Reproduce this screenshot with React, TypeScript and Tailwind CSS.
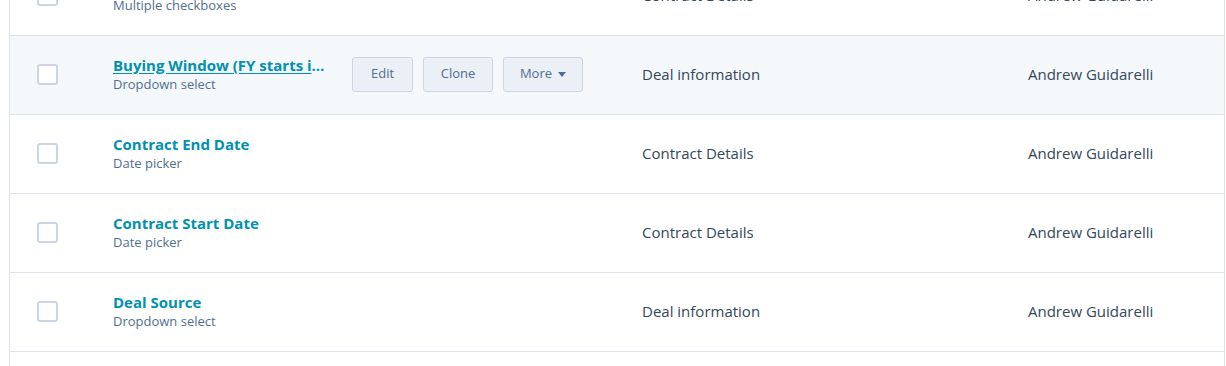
import { ReactNode } from 'react'

type Row = {
  name: string
  type: string
  group: string
  owner: string
  hovered?: boolean
}

const rows: Row[] = [
  { name: 'Competitor', type: 'Multiple checkboxes', group: 'Contract Details', owner: 'Andrew Guidarelli' },
  { name: 'Buying Window (FY starts in October)', type: 'Dropdown select', group: 'Deal information', owner: 'Andrew Guidarelli', hovered: true },
  { name: 'Contract End Date', type: 'Date picker', group: 'Contract Details', owner: 'Andrew Guidarelli' },
  { name: 'Contract Start Date', type: 'Date picker', group: 'Contract Details', owner: 'Andrew Guidarelli' },
  { name: 'Deal Source', type: 'Dropdown select', group: 'Deal information', owner: 'Andrew Guidarelli' },
  { name: 'Deal Type', type: 'Dropdown select', group: 'Deal information', owner: 'Andrew Guidarelli' },
]

function Checkbox() {
  return <span className="block h-[21px] w-[21px] rounded-[3px] border-2 border-[#cbd6e2] bg-white" />
}

function ActionButton({ children, className }: { children: ReactNode; className: string }) {
  return (
    <button
      className={`flex h-[35px] items-center justify-center gap-1.5 rounded-[3px] border border-[#cbd6e2] bg-[#eaf0f6] text-[13px] text-[#506e91] ${className}`}
    >
      {children}
    </button>
  )
}

function PropertyRow({ row }: { row: Row }) {
  return (
    <div
      className={`grid h-[79px] grid-cols-[103px_529px_386px_1fr] items-center border-b border-[#dfe3eb] pb-[2px] ${
        row.hovered ? 'bg-[#f5f8fa]' : 'bg-white'
      }`}
    >
      <div className="pl-[27px]">
        <Checkbox />
      </div>
      <div className="flex items-center">
        <div className="w-[239px] min-w-0 pr-[24px]">
          <div
            className={`truncate text-[15px] font-bold leading-[19px] text-[#0091ae] ${
              row.hovered ? 'underline underline-offset-2' : ''
            }`}
          >
            {row.name}
          </div>
          <div className="text-[13px] leading-[18px] text-[#516f90]">{row.type}</div>
        </div>
        {row.hovered && (
          <div className="flex gap-[10px]">
            <ActionButton className="w-[61px]">Edit</ActionButton>
            <ActionButton className="w-[70px]">Clone</ActionButton>
            <ActionButton className="w-[80px]">
              More
              <svg width="8" height="5" viewBox="0 0 8 5" className="fill-[#506e91]">
                <path d="M0 0h8L4 5z" />
              </svg>
            </ActionButton>
          </div>
        )}
      </div>
      <div className="text-[15px] text-[#33475b]">{row.group}</div>
      <div className="text-[15px] text-[#33475b]">{row.owner}</div>
    </div>
  )
}

export default function App() {
  return (
    <div className="h-[366px] w-[1226px] overflow-hidden bg-white font-['Open_Sans',sans-serif]">
      <div className="-mt-[43px] ml-[9px] mr-px border-x border-[#dfe3eb]">
        {rows.map((row) => (
          <PropertyRow key={row.name} row={row} />
        ))}
      </div>
    </div>
  )
}
